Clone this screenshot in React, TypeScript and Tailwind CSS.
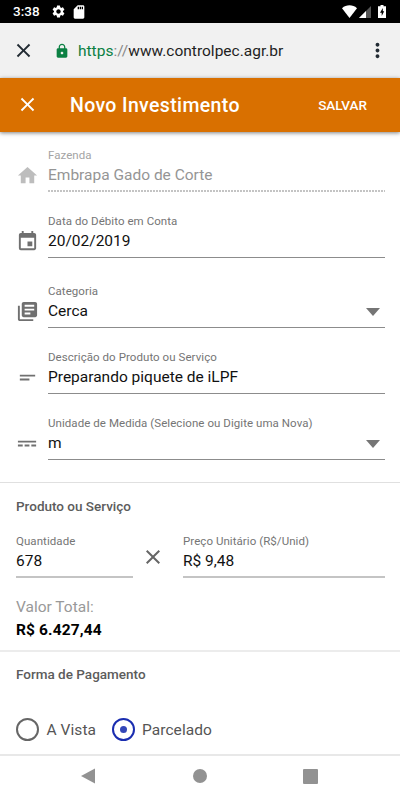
import clsx from 'clsx'
import { ReactNode, useState } from 'react'
import {
  MdClose,
  MdEvent,
  MdHome,
  MdLibraryBooks,
  MdLock,
  MdMoreVert,
  MdPowerInput,
  MdSdCard,
  MdSettings,
  MdShortText
} from 'react-icons/md'

type FieldProps = {
  label: string
  value: string
  icon?: ReactNode
  select?: boolean
  disabled?: boolean
  className?: string
  lineClassName?: string
}

function Field({ label, value, icon, select, disabled, className, lineClassName }: FieldProps) {
  return (
    <div className={clsx('flex h-12', className)}>
      {icon && (
        <div
          className={clsx(
            'mt-[20px] flex h-[22px] w-8 shrink-0 items-center text-[23px]',
            disabled ? 'text-[#bdbdbd]' : 'text-[#707070]'
          )}
        >
          {icon}
        </div>
      )}
      <div className="flex min-w-0 grow flex-col">
        <span
          className={clsx(
            'h-[21px] whitespace-nowrap text-[11.5px] leading-[22px] tracking-[0.06px]',
            disabled ? 'text-[#a4a4a4]' : 'text-[#757575]'
          )}
        >
          {label}
        </span>
        <div className="flex h-5 items-center justify-between">
          <span
            className={clsx(
              'whitespace-nowrap text-[15.5px] leading-5',
              disabled ? 'text-[#959595]' : 'text-[#111]'
            )}
          >
            {value}
          </span>
          {select && (
            <svg className="mt-px mr-[5px] h-2 w-3.5 fill-[#757575]" viewBox="0 0 14 8">
              <path d="M0 0h14L7 8z" />
            </svg>
          )}
        </div>
        <div
          className={clsx(
            'mt-auto',
            disabled
              ? 'h-0.5 bg-[repeating-linear-gradient(90deg,#c4c4c4_0_2px,#fff_2px_3px)]'
              : lineClassName || 'h-px bg-[#8c8c8c]'
          )}
        />
      </div>
    </div>
  )
}

function StatusBar() {
  return (
    <div className="flex h-[23px] items-center bg-black text-white">
      <span className="ml-[13px] w-[38px] text-[13.5px] font-medium leading-[23px]">3:38</span>
      <MdSettings className="h-[15px] w-[15px]" />
      <MdSdCard className="ml-[5px] h-4 w-4" />
      <svg className="ml-auto h-[13px] w-[15px] fill-white" viewBox="0 0 15 13">
        <path d="M7.5 13 0 3.2C4.3-.6 10.7-.6 15 3.2z" />
      </svg>
      <svg className="ml-[2px] h-3 w-3" viewBox="0 0 12 12">
        <path className="fill-[#555]" d="M12 0v12H0z" />
        <path className="fill-white" d="M7 5v7H0z" />
      </svg>
      <svg className="ml-[7px] mr-[14px] h-[13px] w-2" viewBox="0 0 8 13">
        <path className="fill-white" d="M2.5 0h3v1.3H8V13H0V1.3h2.5z" />
        <path className="fill-black" d="M4.8 3 2 7.8h1.7V11L6.2 6.3H4.8z" />
      </svg>
    </div>
  )
}

function Radio({ label, checked, onClick }: { label: string; checked: boolean; onClick: () => void }) {
  return (
    <button className="flex items-center" onClick={onClick}>
      <span
        className={clsx(
          'flex h-[23px] w-[23px] items-center justify-center rounded-full border-2',
          checked ? 'border-[#1a2db0]' : 'border-[#666]'
        )}
      >
        {checked && <span className="h-[7px] w-[7px] rounded-full bg-[#3346b8]" />}
      </span>
      <span className="ml-[7.5px] text-[15.5px] leading-5 tracking-[0.06px] text-[#555]">{label}</span>
    </button>
  )
}

export default function App() {
  const [payment, setPayment] = useState('Parcelado')

  return (
    <div className="flex h-[800px] w-[400px] flex-col overflow-hidden bg-white font-['Roboto',sans-serif]">
      <StatusBar />

      <div className="flex h-[55px] items-center bg-[#f1f1f1]">
        <MdClose className="ml-3 h-[23px] w-[23px] text-[#222b33]" />
        <MdLock className="ml-[19px] h-4 w-4 text-[#0b8043]" />
        <span className="ml-2 pt-px text-[15.5px] leading-5 text-[#1f1f1f]">
          <span className="text-[#0b8043]">https</span>
          <span className="text-[#888]">://</span>www.controlpec.agr.br
        </span>
        <MdMoreVert className="ml-auto mr-[11px] h-[23px] w-[23px] text-[#222b33]" />
      </div>

      <header className="z-10 flex h-[54px] shrink-0 items-center bg-[#d97000] text-white shadow-[0_1px_4px_rgba(0,0,0,0.5)]">
        <MdClose className="mb-px ml-4 h-[23px] w-[23px]" />
        <h1 className="ml-[31px] pt-0.5 text-[19.5px] font-medium leading-6 tracking-[0.36px]">Novo Investimento</h1>
        <button className="ml-auto mr-[33px] text-[13.5px] font-medium">SALVAR</button>
      </header>

      <section className="h-[351px] shrink-0 border-b border-[#e0e0e0] pl-4 pr-[15px] pt-3">
        <Field label="Fazenda" value="Embrapa Gado de Corte" icon={<MdHome />} disabled />
        <Field className="mt-[18px]" label="Data do Débito em Conta" value="20/02/2019" icon={<MdEvent />} />
        <Field className="mt-[22px]" label="Categoria" value="Cerca" icon={<MdLibraryBooks />} select />
        <Field
          className="mt-[18px]"
          label="Descrição do Produto ou Serviço"
          value="Preparando piquete de iLPF"
          icon={<MdShortText />}
        />
        <Field
          className="mt-[18px]"
          label="Unidade de Medida (Selecione ou Digite uma Nova)"
          value="m"
          icon={<MdPowerInput />}
          select
        />
      </section>

      <section className="h-[169px] shrink-0 border-b-2 border-[#ececec] pl-4 pr-[15px] pt-[13px]">
        <h2 className="text-[13.5px] font-medium leading-5 text-[#5c5c5c]">Produto ou Serviço</h2>
        <div className="mt-[14px] flex">
          <Field
            className="w-[117px]"
            label="Quantidade"
            value="678"
            lineClassName="h-0.5 bg-[#c4c4c4]"
          />
          <MdClose className="ml-2 mt-[15px] h-6 w-6 text-[#666]" />
          <Field
            className="ml-[18px] grow"
            label="Preço Unitário (R$/Unid)"
            value="R$ 9,48"
            lineClassName="h-0.5 bg-[#c4c4c4]"
          />
        </div>
        <p className="mt-[19px] text-[15.5px] leading-5 text-[#999]">Valor Total:</p>
        <p className="mt-[3px] text-[15.5px] font-bold leading-5 tracking-[0.12px] text-black">R$ 6.427,44</p>
      </section>

      <section className="h-[102px] shrink-0 px-4 pt-3">
        <h2 className="text-[13.5px] font-medium leading-5 text-[#5c5c5c]">Forma de Pagamento</h2>
        <div className="mt-[34px] flex gap-[15.5px]">
          {['A Vista', 'Parcelado'].map((option) => (
            <Radio
              key={option}
              label={option}
              checked={payment === option}
              onClick={() => setPayment(option)}
            />
          ))}
        </div>
      </section>

      <nav className="flex grow items-center border-t-2 border-[#e8e8e8] pb-1">
        <svg className="ml-[81px] h-4 w-3.5 fill-[#929292]" viewBox="0 0 14 16">
          <path d="M14 .5v15L0 8z" />
        </svg>
        <span className="ml-[98px] h-3.5 w-3.5 rounded-full bg-[#929292]" />
        <span className="ml-[96px] h-[15px] w-[15px] rounded-[1px] bg-[#929292]" />
      </nav>
    </div>
  )
}
